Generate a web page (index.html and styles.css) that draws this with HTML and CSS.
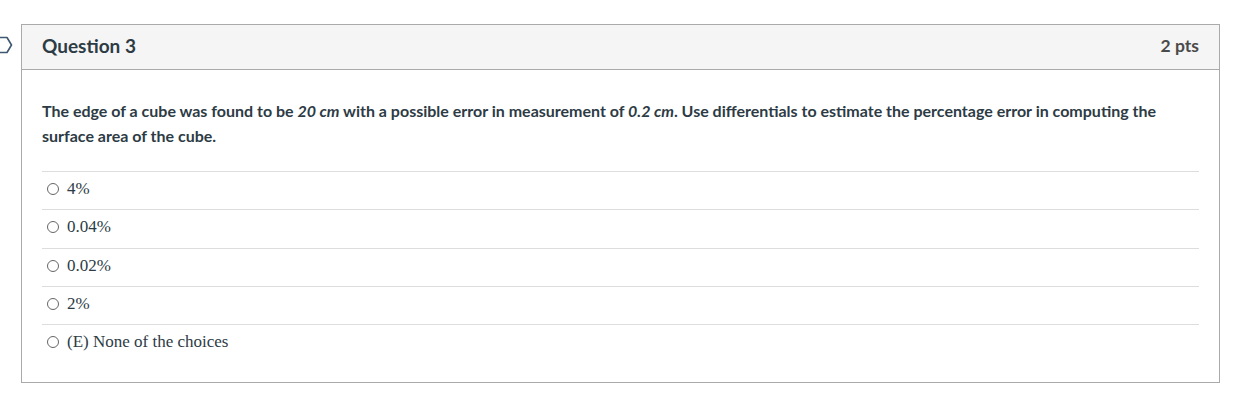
FILE: index.html
```html
<!DOCTYPE html>
<html>
<head>
<meta charset="utf-8">
<link rel="stylesheet" href="styles.css">
</head>
<body>
<div class="page">
  <svg class="flag" width="14" height="18" viewBox="0 0 14 18">
    <path d="M-4 1.5 H7 L11.5 9 L7 16.5 H-4" fill="none" stroke="#3f5870" stroke-width="1.6" stroke-linejoin="round"/>
  </svg>
  <div class="card">
    <div class="card-header">
      <span class="q-title">Question 3</span>
      <span class="q-pts">2 pts</span>
    </div>
    <div class="card-body">
      <p class="q-text">The edge of a cube was found to be <em>20 cm</em> with a possible error in measurement of <em>0.2 cm</em>. Use differentials to estimate the percentage error in computing the surface area of the cube.</p>
      <div class="answers">
        <label class="answer"><span class="radio"></span><span class="a-text">4%</span></label>
        <label class="answer"><span class="radio"></span><span class="a-text">0.04%</span></label>
        <label class="answer"><span class="radio"></span><span class="a-text">0.02%</span></label>
        <label class="answer"><span class="radio"></span><span class="a-text">2%</span></label>
        <label class="answer"><span class="radio"></span><span class="a-text">(E) None of the choices</span></label>
      </div>
    </div>
  </div>
</div>
</body>
</html>
```
FILE: styles.css
```css
html, body {
  margin: 0;
  padding: 0;
  background: #fff;
}
body {
  font-family: Lato, "Liberation Sans", sans-serif;
  color: #2d3b45;
}
.page {
  position: relative;
  padding: 24px 0 0 21px;
}
.flag {
  position: absolute;
  left: 0;
  top: 36px;
}
.card {
  width: 1197px;
  border: 1px solid #aaaaaa;
}
.card-header {
  display: flex;
  justify-content: space-between;
  align-items: center;
  height: 45px;
  padding: 0 20px 3px 20px;
  box-sizing: border-box;
  background: #f5f5f5;
  border-bottom: 1px solid #aaaaaa;
}
.q-title {
  font-size: 19px;
  font-weight: 700;
}
.q-pts {
  font-size: 17.5px;
  font-weight: 700;
  color: #4a4a4a;
}
.card-body {
  padding: 28px 20px 20px 20px;
}
.q-text {
  margin: 0 0 23px 0;
  font-size: 16px;
  font-weight: 700;
  line-height: 25px;
}
.q-text em {
  font-style: italic;
}
.answers {
  display: flex;
  flex-direction: column;
}
.answer {
  display: flex;
  align-items: center;
  border-top: 1px solid #dddddd;
  padding-left: 5px;
  padding-bottom: 3px;
  box-sizing: border-box;
  height: 38.3px;
}
.radio {
  width: 12px;
  height: 12px;
  border: 1px solid #666;
  border-radius: 50%;
  box-sizing: border-box;
  margin-right: 8px;
}
.a-text {
  font-family: "Liberation Serif", serif;
  font-size: 17px;
  color: #2d3b45;
}
```
